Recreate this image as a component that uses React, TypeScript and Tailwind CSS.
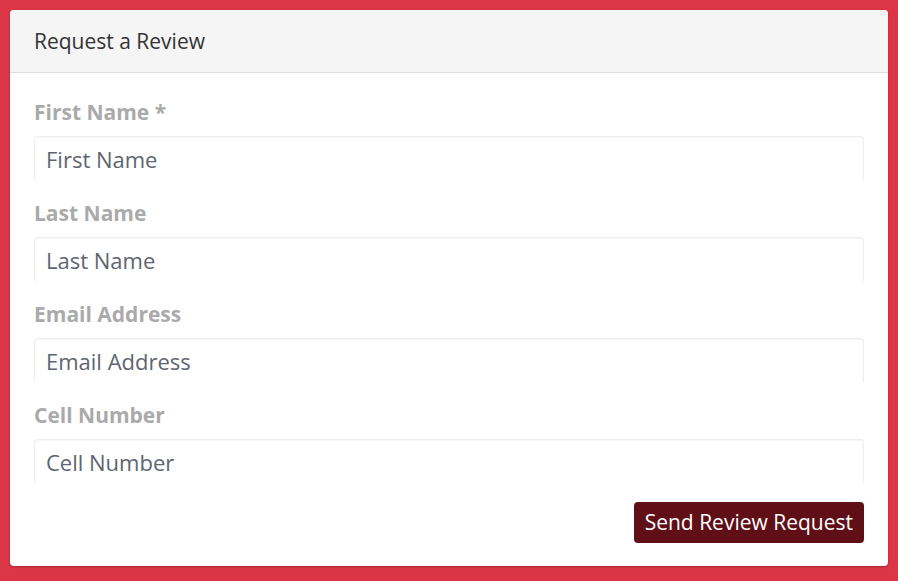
import React, { useState } from "react";

const fields = [
  { id: "firstName", label: "First Name *", placeholder: "First Name", type: "text" },
  { id: "lastName", label: "Last Name", placeholder: "Last Name", type: "text" },
  { id: "email", label: "Email Address", placeholder: "Email Address", type: "email" },
  { id: "cell", label: "Cell Number", placeholder: "Cell Number", type: "tel" },
];

export default function App() {
  const [values, setValues] = useState<Record<string, string>>({});

  return (
    <div
      className="min-h-screen bg-[#dc3545] p-[10px]"
      style={{ fontFamily: '"Open Sans", "Noto Sans", sans-serif' }}
    >
      <div className="rounded-[4px] bg-white shadow-[0_1px_2px_rgba(0,0,0,0.25)]">
        <div className="flex h-[63px] items-center rounded-t-[4px] border-b border-[#dddddd] bg-[#f5f5f5] px-6">
          <h3 className="text-[21px] leading-none text-[#333333]">Request a Review</h3>
        </div>

        <form
          className="flex flex-col px-6 pt-[26px] pb-[23px]"
          onSubmit={(e) => e.preventDefault()}
        >
          {fields.map((field, i) => (
            <div key={field.id} className={i < fields.length - 1 ? "mb-[18px]" : ""}>
              <label
                htmlFor={field.id}
                className="mb-[11px] block text-[21px] leading-[26px] font-bold text-[#aaaaaa]"
              >
                {field.label}
              </label>
              <input
                id={field.id}
                type={field.type}
                placeholder={field.placeholder}
                value={values[field.id] ?? ""}
                onChange={(e) => setValues({ ...values, [field.id]: e.target.value })}
                className="block h-[46px] w-full rounded-[4px] border border-[#eeeeee] border-b-transparent px-[11px] text-[22px] text-[#555555] shadow-[inset_0_1px_1px_rgba(0,0,0,0.04)] outline-none placeholder:text-[#5e6570]"
              />
            </div>
          ))}

          <div className="mt-[17px] flex justify-end">
            <button
              type="submit"
              className="h-[41px] rounded-[4px] bg-[#600f17] px-[11px] text-[21px] leading-none text-white"
            >
              Send Review Request
            </button>
          </div>
        </form>
      </div>
    </div>
  );
}
